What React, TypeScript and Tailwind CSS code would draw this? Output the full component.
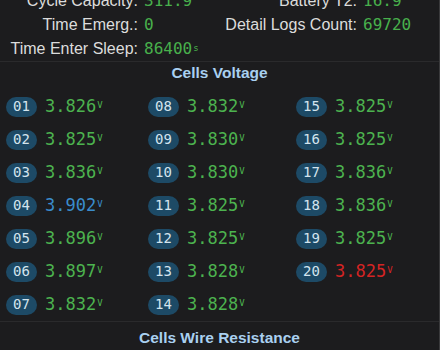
import React from "react";

const cells: { n: string; v: string; tone?: "blue" | "red" }[] = [
  { n: "01", v: "3.826" },
  { n: "02", v: "3.825" },
  { n: "03", v: "3.836" },
  { n: "04", v: "3.902", tone: "blue" },
  { n: "05", v: "3.896" },
  { n: "06", v: "3.897" },
  { n: "07", v: "3.832" },
  { n: "08", v: "3.832" },
  { n: "09", v: "3.830" },
  { n: "10", v: "3.830" },
  { n: "11", v: "3.825" },
  { n: "12", v: "3.825" },
  { n: "13", v: "3.828" },
  { n: "14", v: "3.828" },
  { n: "15", v: "3.825" },
  { n: "16", v: "3.825" },
  { n: "17", v: "3.836" },
  { n: "18", v: "3.836" },
  { n: "19", v: "3.825" },
  { n: "20", v: "3.825", tone: "red" },
];

const sans = "font-['Liberation_Sans',Arial,sans-serif]";
const mono = "font-['DejaVu_Sans_Mono',monospace]";

function Stat({ label, value, unit, labelW }: { label: string; value?: string; unit?: string; labelW: string }) {
  return (
    <div className="flex items-center h-[24px]">
      <span className={`${labelW} shrink-0 whitespace-nowrap text-right text-[#dcdcdc] text-[16px] ${sans}`}>{label}</span>
      {value && (
        <span className={`ml-[6px] text-[#48b04c] text-[16px] ${mono}`}>
          {value}
          {unit && <sup className="text-[9px] ml-[1px] relative -top-[3px]">{unit}</sup>}
        </span>
      )}
    </div>
  );
}

function Cell({ n, v, tone }: { n: string; v: string; tone?: "blue" | "red" }) {
  const color = tone === "blue" ? "text-[#3a8ccc]" : tone === "red" ? "text-[#d42424]" : "text-[#4cb34f]";
  return (
    <div className="flex items-center h-[33px]">
      <span className={`w-[31px] h-[20px] rounded-full bg-[#1d4a66] text-[#d3e4ee] text-[14px] flex items-center justify-center ${mono}`}>
        {n}
      </span>
      <span className={`ml-[8px] text-[17px] ${color} ${mono}`}>
        {v}
        <sup className="text-[9px] ml-[1px] relative -top-[4px]">V</sup>
      </span>
    </div>
  );
}

export default function App() {
  const cols = [cells.slice(0, 7), cells.slice(7, 14), cells.slice(14, 20)];
  return (
    <div className="w-[440px] h-[350px] overflow-hidden bg-[#1c1c1e] border-r border-[#3a3a3c]">
      {/* top stats */}
      <div className="grid grid-cols-[220px_1fr] -mt-[11px]">
        <div>
          <Stat labelW="w-[138px]" label="Cycle Capacity:" value="311.9" />
          <Stat labelW="w-[138px]" label="Time Emerg.:" value="0" />
          <Stat labelW="w-[138px]" label="Time Enter Sleep:" value="86400" unit="s" />
        </div>
        <div>
          <Stat labelW="w-[137px]" label="Battery T2:" value="16.9" />
          <Stat labelW="w-[137px]" label="Detail Logs Count:" value="69720" />
        </div>
      </div>

      <div className="border-t border-[#2a2a2c]" />
      <h2 className={`h-[22px] flex items-center justify-center text-[15.5px] font-bold text-[#a9d0f0] ${sans}`}>
        Cells Voltage
      </h2>

      <div className="grid grid-cols-[142px_148px_1fr] pl-[6px] pt-[6px]">
        {cols.map((col, i) => (
          <div key={i}>
            {col.map((c) => (
              <Cell key={c.n} {...c} />
            ))}
          </div>
        ))}
      </div>

      <div className="border-t border-[#2a2a2c]" />
      <h2 className={`h-[32px] flex items-center justify-center text-[15.5px] font-bold text-[#a9d0f0] ${sans}`}>
        Cells Wire Resistance
      </h2>
    </div>
  );
}
